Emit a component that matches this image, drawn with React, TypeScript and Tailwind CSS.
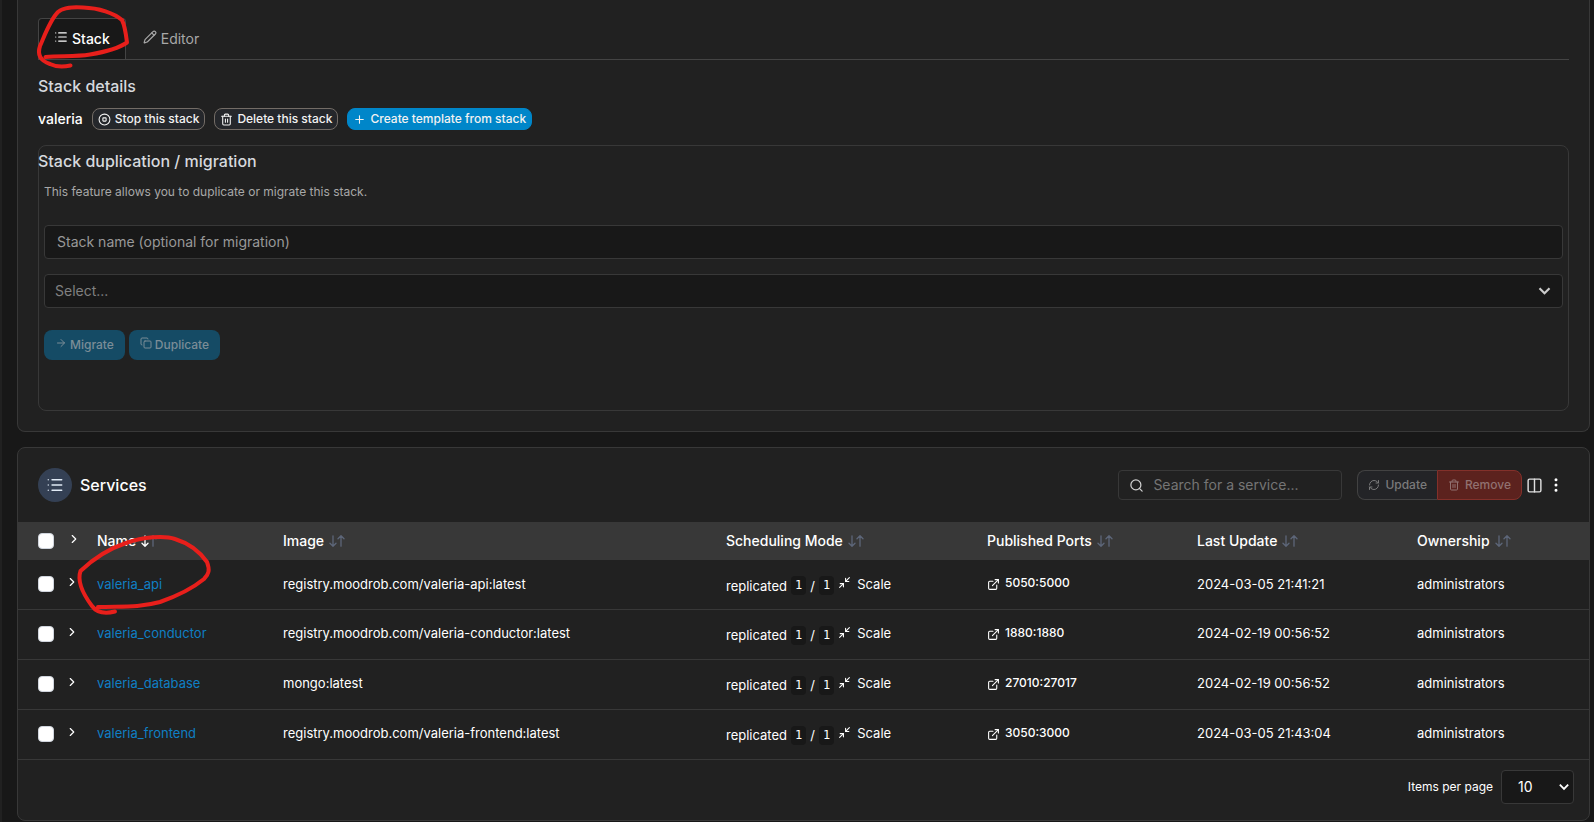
import { useState } from 'react';
import {
  ArrowRight,
  ChevronRight,
  CircleStop,
  Columns2,
  Copy,
  EllipsisVertical,
  ExternalLink,
  List,
  Minimize2,
  Pencil,
  Plus,
  RefreshCw,
  Search,
  Trash2,
} from 'lucide-react';

interface IService {
  name: string;
  image: string;
  ports: string;
  updatedAt: string;
}

const services: IService[] = [
  { name: 'valeria_api', image: 'registry.moodrob.com/valeria-api:latest', ports: '5050:5000', updatedAt: '2024-03-05 21:41:21' },
  { name: 'valeria_conductor', image: 'registry.moodrob.com/valeria-conductor:latest', ports: '1880:1880', updatedAt: '2024-02-19 00:56:52' },
  { name: 'valeria_database', image: 'mongo:latest', ports: '27010:27017', updatedAt: '2024-02-19 00:56:52' },
  { name: 'valeria_frontend', image: 'registry.moodrob.com/valeria-frontend:latest', ports: '3050:3000', updatedAt: '2024-03-05 21:43:04' },
];

const columns = ['Name', 'Image', 'Scheduling Mode', 'Published Ports', 'Last Update', 'Ownership'];

function SortArrows({ active }: { active: boolean }) {
  return (
    <svg width="16" height="12" viewBox="0 0 16 12" fill="none" strokeWidth="1.3" strokeLinecap="round" strokeLinejoin="round">
      <path d="M4 .8v10.4M1 8.2l3 3 3-3" className={active ? 'stroke-white' : 'stroke-[#5d6679]'} />
      <path d="M12 11.2V.8M9 3.8l3-3 3 3" className="stroke-[#5d6679]" />
    </svg>
  );
}

function Chevron({ width }: { width: number }) {
  return (
    <svg width={width} height="8" viewBox="0 0 12 8" fill="none" stroke="currentColor" strokeWidth="2.2">
      <path d="M1 1.2l5 5 5-5" />
    </svg>
  );
}

function Checkbox({ label }: { label: string }) {
  return (
    <input
      type="checkbox"
      aria-label={label}
      className="block size-4 appearance-none rounded border border-[#d0d5dd] bg-white checked:bg-[#0086c9]"
    />
  );
}

function StackPanel() {
  const [stackName, setStackName] = useState('');

  return (
    <section className="rounded-b-lg border border-t-0 border-[#383838] bg-[#212121] px-5 pt-[18px] pb-5">
      <div role="tablist" className="flex h-[42px] gap-0.5 border-b border-[#444444] text-sm">
        <button role="tab" aria-selected="true" className="flex items-center gap-1 rounded-t border border-b-0 border-[#444444] bg-[#181818] px-[15px] font-medium text-white">
          <List size={14} className="mb-1" />
          Stack
        </button>
        <button role="tab" aria-selected="false" className="flex items-center gap-1 px-[15px] text-[#a8a8a8]">
          <Pencil size={14} strokeWidth={2} className="mb-1" />
          Editor
        </button>
      </div>

      <h2 className="mt-4 text-base leading-5 font-medium text-[#d6d9de]">Stack details</h2>
      <div className="mt-3 flex items-center gap-[9px] text-xs font-medium text-[#f2f2f2]">
        <span className="text-sm font-medium text-white">valeria</span>
        <button className="flex h-[22px] items-center gap-1 rounded-lg border border-[#736c66] bg-[#25272b] px-[5px]">
          <CircleStop size={13} />
          Stop this stack
        </button>
        <button className="flex h-[22px] items-center gap-1 rounded-lg border border-[#736c66] bg-[#25272b] px-[5px]">
          <Trash2 size={13} />
          Delete this stack
        </button>
        <button className="flex h-[22px] items-center gap-1 rounded-lg border border-[#0086c9] bg-[#0086c9] px-[5px]">
          <Plus size={13} />
          Create template from stack
        </button>
      </div>

      <div className="mt-[15px] rounded-lg border border-[#383838] pt-[5px] pb-[50px]">
        <h2 className="-ml-px text-base leading-5 font-medium text-[#d6d9de]">Stack duplication / migration</h2>
        <div className="px-[5px]">
          <p className="mt-3 text-xs leading-[18px] text-[#a8a8a8]">This feature allows you to duplicate or migrate this stack.</p>
          <input
            type="text"
            aria-label="Stack name"
            placeholder="Stack name (optional for migration)"
            value={stackName}
            onChange={(e) => setStackName(e.target.value)}
            className="mt-6 block h-[34px] w-full rounded border border-[#383838] bg-[#181818] px-3 pb-0.5 text-sm text-white placeholder:text-[#999999]"
          />
          <div className="relative mt-[15px] text-[#cccccc]">
            <select aria-label="Environment" className="block h-[34px] w-full appearance-none rounded border border-[#383838] bg-[#181818] px-2.5 text-sm text-[#808080]">
              <option>Select...</option>
            </select>
            <span className="pointer-events-none absolute inset-y-0 right-3 flex items-center">
              <Chevron width={13} />
            </span>
          </div>
          <div className="mt-[22px] flex gap-1 text-xs font-medium text-[#7b8d97]">
            <button disabled className="flex h-[30px] items-center gap-[3px] rounded-lg bg-[#154b65] px-[11px]">
              <ArrowRight size={12} className="mb-1" />
              Migrate
            </button>
            <button disabled className="flex h-[30px] items-center gap-[3px] rounded-lg bg-[#154b65] px-[11px]">
              <Copy size={12} className="mb-1" />
              Duplicate
            </button>
          </div>
        </div>
      </div>
    </section>
  );
}

function ServicesPanel() {
  const [search, setSearch] = useState('');

  return (
    <section className="mt-[15px] rounded-lg border border-[#383838] bg-[#212121]">
      <div className="flex h-[74px] items-center pr-6 pl-5">
        <span className="flex size-[34px] items-center justify-center rounded-full bg-[#344054] text-[#e0eaf5]">
          <List size={18} strokeWidth={1.8} />
        </span>
        <h2 className="ml-2 text-base font-medium text-white">Services</h2>

        <label className="ml-auto flex h-[30px] w-[224px] items-center gap-[9px] rounded border border-[#383838] px-2.5 text-[#d0d0d0]">
          <Search size={15} className="shrink-0" />
          <input
            type="text"
            aria-label="Search for a service"
            placeholder="Search for a service..."
            value={search}
            onChange={(e) => setSearch(e.target.value)}
            className="w-full min-w-0 bg-transparent text-sm text-white outline-none placeholder:text-[#757575]"
          />
        </label>

        <div className="ml-[15px] flex text-xs font-medium">
          <button disabled className="flex h-[30px] items-center gap-[5px] rounded-l-lg border border-r-0 border-[#424242] bg-[#232427] px-2.5 text-[#7a7a7b]">
            <RefreshCw size={12} />
            Update
          </button>
          <button disabled className="flex h-[30px] items-center gap-[5px] rounded-r-lg border border-[#83302a] bg-[#5c221e] px-2.5 text-[#917170]">
            <Trash2 size={12} />
            Remove
          </button>
        </div>
        <button aria-label="Columns" className="ml-1 text-[#e0e0e0]">
          <Columns2 size={17} />
        </button>
        <button aria-label="Table settings" className="ml-1 text-white">
          <EllipsisVertical size={18} strokeWidth={2} />
        </button>
      </div>

      <table className="w-full table-fixed text-left text-[13px] text-white">
        <colgroup>
          <col className="w-[43px]" />
          <col className="w-[26px]" />
          <col className="w-[186px]" />
          <col className="w-[443px]" />
          <col className="w-[261px]" />
          <col className="w-[210px]" />
          <col className="w-[220px]" />
          <col className="w-[182px]" />
        </colgroup>
        <thead>
          <tr className="h-[38px] bg-[#383838] text-sm">
            <th className="pl-5">
              <Checkbox label="Select all services" />
            </th>
            <th className="pl-1.5">
              <button aria-label="Expand all" className="mb-1 block">
                <ChevronRight size={14} />
              </button>
            </th>
            {columns.map((column) => (
              <th key={column} className="px-2.5 font-medium">
                <button className="flex items-center gap-[5px]">
                  {column}
                  <SortArrows active={column === 'Name'} />
                </button>
              </th>
            ))}
          </tr>
        </thead>
        <tbody>
          {services.map((service) => (
            <tr key={service.name} className="h-[50px] border-b border-[#383838] first:h-[49px]">
              <td className="pl-5">
                <Checkbox label={`Select ${service.name}`} />
              </td>
              <td className="pl-1">
                <button aria-label={`Expand ${service.name}`} className="mb-1 block">
                  <ChevronRight size={14} />
                </button>
              </td>
              <td className="px-2.5">
                <a href="#" className="text-[#0f7fc4] hover:underline">{service.name}</a>
              </td>
              <td className="px-2.5">{service.image}</td>
              <td className="px-2.5">
                <div className="flex items-center gap-1">
                  <span className="pt-1">replicated</span>
                  <code className="mt-0.5 rounded bg-[#181818] px-1 font-['DejaVu_Sans_Mono',monospace] text-xs leading-[19px]">1</code>
                  <span className="pt-1">/</span>
                  <code className="mt-0.5 rounded bg-[#181818] px-1 font-['DejaVu_Sans_Mono',monospace] text-xs leading-[19px]">1</code>
                  <a href="#" className="flex items-center gap-1.5">
                    <Minimize2 size={13} className="mb-1" />
                    Scale
                  </a>
                </div>
              </td>
              <td className="px-2.5">
                <a href="#" className="mb-0.5 flex items-center gap-[5px] text-xs font-medium">
                  <ExternalLink size={13} className="mt-0.5" />
                  {service.ports}
                </a>
              </td>
              <td className="px-2.5">{service.updatedAt}</td>
              <td className="px-2.5">administrators</td>
            </tr>
          ))}
        </tbody>
      </table>

      <div className="flex h-[60px] items-center justify-end gap-2 pr-[15px] pb-[6px] text-xs text-white">
        <label htmlFor="page-size">Items per page</label>
        <div className="relative">
          <select id="page-size" className="block h-[34px] w-[73px] appearance-none rounded border border-[#383838] bg-[#181818] pl-4 text-sm">
            <option>10</option>
          </select>
          <span className="pointer-events-none absolute inset-y-0 right-[5px] flex items-center">
            <Chevron width={10} />
          </span>
        </div>
      </div>
    </section>
  );
}

// Hand-drawn marks around the active tab and the first service
function Annotations() {
  return (
    <svg className="pointer-events-none absolute top-0 -left-0.5" width="240" height="640" viewBox="0 0 240 640" fill="none" stroke="#e81f1b" strokeWidth="4" strokeLinecap="round" strokeLinejoin="round">
      <path d="M45.500 57C60 55.500 75 57 90 54.500C105 52 119 48 127 42.500C126 34 125 26 122 20C114 13 99 8 83 7.500C73 7 64 7 58 12C50 20 44 37 40 46C37 55 41 61 50 64C56 67 63 67 70.500 65.500" />
      <path d="M98 607C120 606 138 608 160 602C177 596 193 588 204 579C209 574 210 570 207 562C200 552 188 543 175 539C164 535 143 537 126 543C108 549 92 560 80.500 571C77 581 83 594 92 606C97 613 105 614 115 611.500" />
    </svg>
  );
}

export default function App() {
  return (
    <div className="relative min-h-screen overflow-hidden border-l-2 border-[#212121] bg-[#181818] pr-1 pb-0.5 pl-[15px] font-['Inter',sans-serif]">
      <StackPanel />
      <ServicesPanel />
      <Annotations />
    </div>
  );
}
